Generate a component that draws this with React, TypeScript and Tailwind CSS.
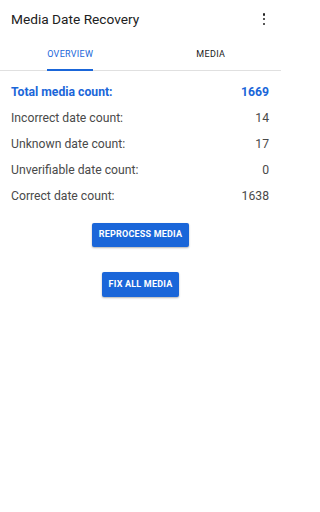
import React from "react";

const rows = [
  { label: "Incorrect date count:", value: "14" },
  { label: "Unknown date count:", value: "17" },
  { label: "Unverifiable date count:", value: "0" },
  { label: "Correct date count:", value: "1638" },
];

export default function App() {
  return (
    <div className="min-h-[512px] w-[281px] bg-white font-['Roboto',sans-serif] text-[#212121]">
      {/* top bar */}
      <header className="flex h-[38px] items-center justify-between pl-[11px] pr-[15px]">
        <h1 className="text-[13.7px] font-normal">Media Date Recovery</h1>
        <div className="flex h-[12px] w-[4px] flex-col items-center justify-between">
          <span className="h-[2.5px] w-[2.5px] rounded-full bg-[#212121]" />
          <span className="h-[2.5px] w-[2.5px] rounded-full bg-[#212121]" />
          <span className="h-[2.5px] w-[2.5px] rounded-full bg-[#212121]" />
        </div>
      </header>

      {/* tabs */}
      <nav className="flex h-[33px] border-b border-[#e0e0e0]">
        <div className="-mb-px flex flex-1 items-end justify-center">
          <span className="border-b-2 border-[#1a66d9] pb-[8px] text-[9px] tracking-[0.3px] text-[#1a66d9]">
            OVERVIEW
          </span>
        </div>
        <div className="-mb-px flex flex-1 items-end justify-center">
          <span className="border-b-2 border-transparent pb-[8px] text-[9px] tracking-[0.3px] text-[#212121]">
            MEDIA
          </span>
        </div>
      </nav>

      {/* counts */}
      <section className="flex flex-col pl-[11px] pr-[12px] pt-[8px] text-[12.2px] leading-[26px]">
        <div className="flex justify-between font-bold text-[#1a66d9]">
          <span>Total media count:</span>
          <span>1669</span>
        </div>
        {rows.map((r) => (
          <div key={r.label} className="flex justify-between text-[#4a4a4a]">
            <span>{r.label}</span>
            <span>{r.value}</span>
          </div>
        ))}
      </section>

      {/* actions */}
      <div className="mt-[14px] flex flex-col items-center gap-[25px]">
        <button className="h-[24px] rounded-[2px] bg-[#1a66d9] px-[6.5px] text-[9px] font-bold tracking-[0.2px] text-white shadow-[0_1px_2px_rgba(0,0,0,0.3)]">
          REPROCESS MEDIA
        </button>
        <button className="h-[25px] rounded-[2px] bg-[#1a66d9] px-[6.5px] text-[9px] font-bold tracking-[0.2px] text-white shadow-[0_1px_2px_rgba(0,0,0,0.3)]">
          FIX ALL MEDIA
        </button>
      </div>
    </div>
  );
}
